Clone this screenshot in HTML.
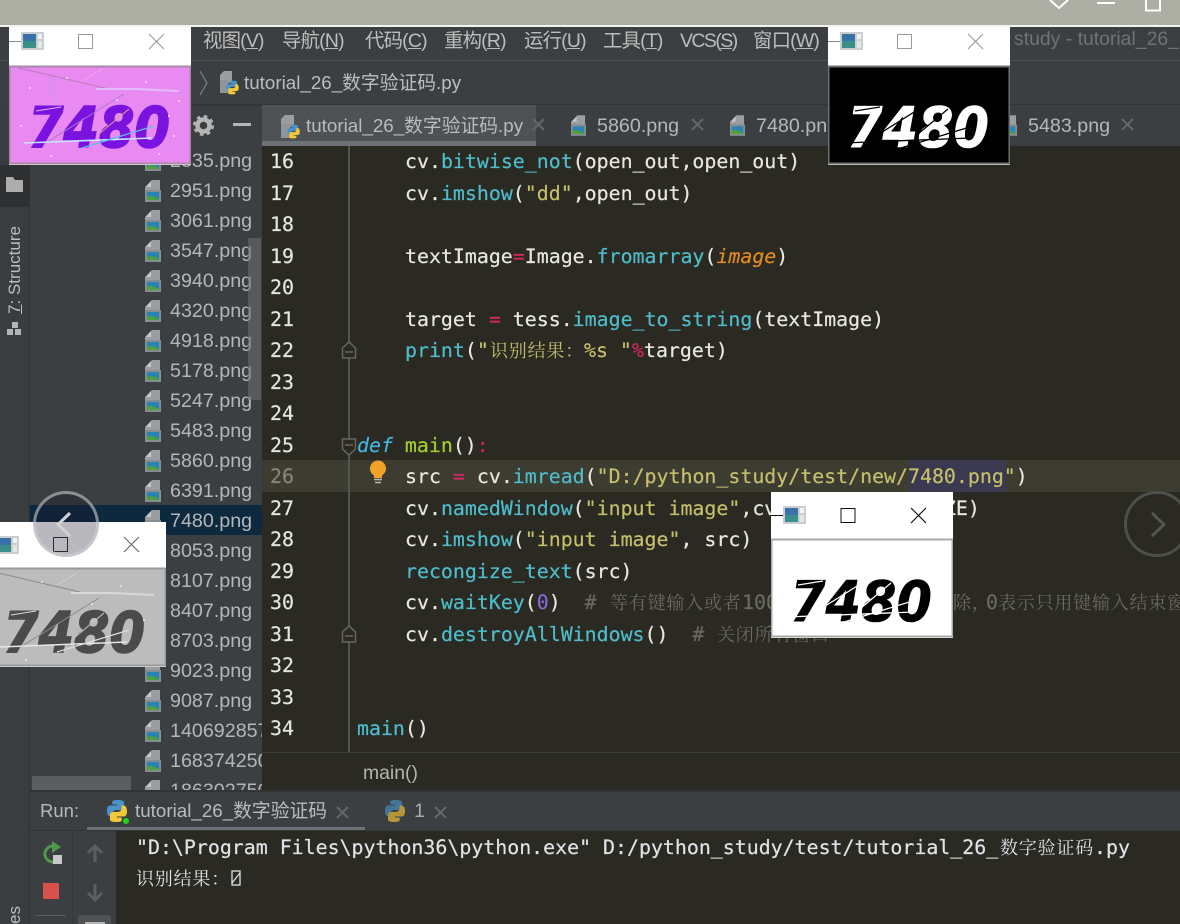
<!DOCTYPE html>
<html lang="zh"><head><meta charset="utf-8"><title>tutorial_26</title>
<style>
html,body{margin:0;padding:0;background:#2a2a23}
#p{position:relative;width:1180px;height:924px;overflow:hidden;background:#3c3f41;font-family:"Liberation Sans","Noto Sans CJK SC",sans-serif;font-size:19.6px;color:#bbb}
.a{position:absolute}
.m{position:absolute;top:27px;line-height:28px;white-space:nowrap;font-size:19.4px;letter-spacing:-.8px;color:#bdbdbd}
.f{position:absolute;left:170px;line-height:30px;height:30px;margin-top:1px;white-space:nowrap;font-size:19.7px;color:#b4b6b8}
.ic{position:absolute;left:145px;width:16px;height:22px}
.ln{position:absolute;left:270px;width:40px;margin-top:1px;font:19.9px/31.5px "DejaVu Sans Mono",monospace;color:#e6e6e0;height:31.5px;-webkit-text-stroke:.2px}
.c{position:absolute;margin-top:1px;white-space:pre;font:19.9px/31.5px "DejaVu Sans Mono","Noto Serif CJK SC",monospace;color:#e8e8e0;height:31.5px;-webkit-text-stroke:.2px}
.c i{font-style:normal}.fn{color:#4fbccb}.st{color:#c6bf6c}.op{color:#d32660}.kw{color:#45b4e0;font-style:italic!important}.gr{color:#a3cf2a}.or{color:#e08a22;font-style:italic!important}.nu{color:#8868d8}.cm{color:#6a6a5e}
.z{font:18px/31.5px "Noto Serif CJK SC",serif;letter-spacing:.8px;-webkit-text-stroke:0}
.win{position:absolute;width:182px;background:#fff}
.win svg{display:block}
.tb{position:absolute}
.cap{font:italic bold 56px "DejaVu Sans",sans-serif}
.u{font-size:18.8px}
</style></head><body>
<div id="p">
<svg width="0" height="0" style="position:absolute"><defs>
<symbol id="py" viewBox="0 0 22 24"><path d="M10.8 1C6 1 6.3 3 6.3 3v2.5h4.8v1H4C2 6.500 1 8.500 1 12s1.500 5.500 3.500 5.500H6.500v-3c0-2 1.800-3.500 3.800-3.500h4.700c1.700 0 3-1.300 3-3V3.500C18 1.800 16.300 1 10.800 1z" fill="#4a93c9"/><path d="M11.200 23c4.800 0 4.500-2 4.500-2v-2.500h-4.800v-1H18c2 0 3-2 3-5.500s-1.500-5.500-3.500-5.500H15.500v3c0 2-1.800 3.500-3.800 3.500H7c-1.700 0-3 1.300-3 3v4.500C4 22.200 5.700 23 11.200 23z" fill="#f3c737"/></symbol>
<symbol id="im" viewBox="0 0 16 22"><path d="M7 0h8v10H0V7z" fill="#9a9ea1"/><path d="M6 1v6H1z" fill="#c4c6c8"/><rect x="0" y="10" width="16" height="12" fill="#878d90"/><rect x="2" y="12" width="12" height="8" fill="#2784b4"/><path d="M2 20v-3c3-2 6-1 12 2v1z" fill="#4e9f3d"/></symbol>
<symbol id="wi" viewBox="0 0 23 18"><rect width="23" height="18" fill="#c9cfd0"/><rect x="2" y="2" width="13" height="14" fill="#3b8f8a"/><rect x="2" y="2" width="13" height="7" fill="#3a72a8"/><rect x="17" y="2" width="4" height="5" fill="#eef4f2"/><rect x="17" y="9" width="4" height="7" fill="#e3e8e3"/></symbol>
</defs></svg>

<!-- top title strip -->
<div class="a" style="left:0;top:0;width:1180px;height:25px;background:#adafa5"></div>
<div class="a" style="left:0;top:25px;width:1180px;height:2px;background:#f2f2f0"></div>
<svg class="a" style="left:1045px;top:0" width="125" height="14" fill="none" stroke="#fff" stroke-width="2"><path d="M5 0l9 8 9-8"/><path d="M52 3h18"/><path d="M101 0v10.500h14V0"/></svg>

<!-- menu -->
<div class="m" style="left:203px">视图(<u>V</u>)</div>
<div class="m" style="left:282px">导航(<u>N</u>)</div>
<div class="m" style="left:365px">代码(<u>C</u>)</div>
<div class="m" style="left:444px">重构(<u>R</u>)</div>
<div class="m" style="left:524px">运行(<u>U</u>)</div>
<div class="m" style="left:603px">工具(<u>T</u>)</div>
<div class="m" style="left:680px;letter-spacing:-1.500px">VCS(<u>S</u>)</div>
<div class="m" style="left:753px">窗口(<u>W</u>)</div>
<div class="m" style="left:1014px;top:25px;letter-spacing:0;color:#707274">study - tutorial_26_</div>
<div class="a" style="left:0;top:60px;width:1180px;height:1px;background:#4d5052"></div>

<!-- nav bar -->
<svg class="a" style="left:198px;top:70px" width="12" height="26" fill="none" stroke="#777" stroke-width="1.300"><path d="M2 1l7 12-7 12"/></svg>
<svg class="a" style="left:219px;top:70px" width="21" height="25"><path d="M5 1h8v12H1V5z" fill="#9a9ea1"/><rect x="1" y="10" width="8" height="13" fill="#8f9598"/><use href="#py" x="6" y="10" width="15" height="15"/></svg>
<div class="a u" style="left:244px;top:68px;line-height:30px;white-space:nowrap;color:#bdbdbd">tutorial_26_数字验证码.py</div>
<div class="a" style="left:0;top:104px;width:1180px;height:2px;background:#323436"></div>

<!-- left tool strip -->
<div class="a" style="left:0;top:104px;width:29px;height:820px;background:#3a3d3f"></div>
<div class="a" style="left:29px;top:104px;width:1px;height:820px;background:#2f3133"></div>
<div class="a" style="left:0;top:165px;width:29px;height:42px;background:#2e3032"></div>
<svg class="a" style="left:6px;top:176px" width="17" height="16"><path d="M0 1h7l2 3h8v12H0z" fill="#adadad"/></svg>
<div class="a" style="left:15px;top:270px;transform:translate(-50%,-50%) rotate(-90deg);white-space:nowrap;font-size:17px;line-height:20px;color:#bdbdbd"><u>7</u>: Structure</div>
<svg class="a" style="left:7px;top:322px" width="15" height="14" fill="#b4b4b4"><rect x="5" y="0" width="6" height="6"/><rect x="0" y="7" width="6" height="6"/><rect x="8" y="7" width="6" height="6"/></svg>
<div class="a" style="left:15px;top:915px;transform:translate(-50%,-50%) rotate(-90deg);white-space:nowrap;font-size:17px;line-height:20px;color:#bdbdbd">es</div>

<!-- sidebar tools -->
<svg class="a" style="left:193px;top:115px" width="21" height="21"><circle cx="10.500" cy="10.500" r="6" fill="none" stroke="#b5b5b5" stroke-width="4.500"/><circle cx="10.500" cy="10.500" r="9" fill="none" stroke="#b5b5b5" stroke-width="3" stroke-dasharray="3.500 3.570"/></svg>
<div class="a" style="left:233px;top:123px;width:18px;height:3px;background:#b5b5b5"></div>

<!-- file tree -->
<div class="a" style="left:30px;top:505px;width:232px;height:30px;background:#0d293e"></div>
<div class="a" style="left:30px;top:146px;width:232px;height:644px;overflow:hidden" id="t">
<div style="position:absolute;left:-30px;top:-146px;width:262px;height:800px">
<div class="f" style="top:145px">2835.png</div><svg class="ic" style="top:149px"><use href="#im"/></svg>
<div class="f" style="top:175px">2951.png</div><svg class="ic" style="top:180px"><use href="#im"/></svg>
<div class="f" style="top:205px">3061.png</div><svg class="ic" style="top:210px"><use href="#im"/></svg>
<div class="f" style="top:235px">3547.png</div><svg class="ic" style="top:240px"><use href="#im"/></svg>
<div class="f" style="top:265px">3940.png</div><svg class="ic" style="top:270px"><use href="#im"/></svg>
<div class="f" style="top:295px">4320.png</div><svg class="ic" style="top:300px"><use href="#im"/></svg>
<div class="f" style="top:325px">4918.png</div><svg class="ic" style="top:330px"><use href="#im"/></svg>
<div class="f" style="top:355px">5178.png</div><svg class="ic" style="top:360px"><use href="#im"/></svg>
<div class="f" style="top:385px">5247.png</div><svg class="ic" style="top:390px"><use href="#im"/></svg>
<div class="f" style="top:415px">5483.png</div><svg class="ic" style="top:420px"><use href="#im"/></svg>
<div class="f" style="top:445px">5860.png</div><svg class="ic" style="top:450px"><use href="#im"/></svg>
<div class="f" style="top:475px">6391.png</div><svg class="ic" style="top:480px"><use href="#im"/></svg>
<div class="f" style="top:505px">7480.png</div><svg class="ic" style="top:510px"><use href="#im"/></svg>
<div class="f" style="top:535px">8053.png</div><svg class="ic" style="top:540px"><use href="#im"/></svg>
<div class="f" style="top:565px">8107.png</div><svg class="ic" style="top:570px"><use href="#im"/></svg>
<div class="f" style="top:595px">8407.png</div><svg class="ic" style="top:600px"><use href="#im"/></svg>
<div class="f" style="top:625px">8703.png</div><svg class="ic" style="top:630px"><use href="#im"/></svg>
<div class="f" style="top:655px">9023.png</div><svg class="ic" style="top:660px"><use href="#im"/></svg>
<div class="f" style="top:685px">9087.png</div><svg class="ic" style="top:690px"><use href="#im"/></svg>
<div class="f" style="top:715px">1406928571.png</div><svg class="ic" style="top:720px"><use href="#im"/></svg>
<div class="f" style="top:745px">1683742501.png</div><svg class="ic" style="top:750px"><use href="#im"/></svg>
<div class="f" style="top:775px">1863027501.png</div><svg class="ic" style="top:780px"><use href="#im"/></svg>
</div></div>
<div class="a" style="left:248px;top:238px;width:13px;height:162px;background:rgba(110,112,114,.55)"></div>
<div class="a" style="left:32px;top:776px;width:99px;height:14px;background:#5b5d5f"></div>

<!-- tab bar -->
<div class="a" style="left:262px;top:105px;width:918px;height:40px;background:#3c3f41"></div>
<div class="a" style="left:262px;top:105px;width:274px;height:37px;background:#4e5254"></div>
<div class="a" style="left:262px;top:141px;width:274px;height:5px;background:#6d7074"></div>
<svg class="a" style="left:279px;top:114px" width="23" height="25"><path d="M6 1h9v12H2V5z" fill="#9a9ea1"/><rect x="2" y="10" width="9" height="14" fill="#8f9598"/><use href="#py" x="7" y="10" width="15" height="15"/></svg>
<div class="a u" style="left:306px;top:111px;line-height:30px;white-space:nowrap;color:#b9bbbd">tutorial_26_数字验证码.py</div>
<svg class="a" style="left:532px;top:118px" width="14" height="14" stroke="#64676a" stroke-width="2"><path d="M1 1l11 11M12 1L1 12"/></svg>
<svg class="a" style="left:571px;top:115px;width:15px;height:21px"><use href="#im" width="15" height="21"/></svg>
<div class="a" style="left:597px;top:111px;line-height:30px;font-size:19.7px;color:#b4b6b8">5860.png</div>
<svg class="a" style="left:691px;top:118px" width="14" height="14" stroke="#64676a" stroke-width="2"><path d="M1 1l11 11M12 1L1 12"/></svg>
<svg class="a" style="left:730px;top:115px;width:15px;height:21px"><use href="#im" width="15" height="21"/></svg>
<div class="a" style="left:756px;top:111px;line-height:30px;font-size:19.7px;color:#b4b6b8">7480.png</div>
<svg class="a" style="left:1002px;top:115px;width:15px;height:21px"><use href="#im" width="15" height="21"/></svg>
<div class="a" style="left:1028px;top:111px;line-height:30px;font-size:19.7px;color:#b4b6b8">5483.png</div>
<svg class="a" style="left:1121px;top:118px" width="14" height="14" stroke="#64676a" stroke-width="2"><path d="M1 1l11 11M12 1L1 12"/></svg>

<!-- editor -->
<div class="a" style="left:262px;top:146px;width:918px;height:644px;background:#2a2a23"></div>
<div class="a" style="left:262px;top:460px;width:918px;height:32px;background:#3d3c31"></div>
<div class="a" style="left:909px;top:460px;width:97px;height:32px;background:#3a3950"></div>
<div class="a" style="left:348px;top:146px;width:2px;height:607px;background:#55554f"></div>
<div class="a" style="left:262px;top:752px;width:918px;height:1px;background:#3e3e38"></div>
<svg class="a" style="left:341px;top:341px" width="16" height="18" fill="#2a2a23" stroke="#66665f" stroke-width="1.500"><path d="M1.500 17V7L8 1l6.500 6v10z"/><path d="M4 11h8"/></svg>
<svg class="a" style="left:341px;top:438px" width="16" height="18" fill="#2a2a23" stroke="#66665f" stroke-width="1.500"><path d="M1.500 1v10L8 17l6.500-6V1z"/><path d="M4 7h8"/></svg>
<svg class="a" style="left:341px;top:625px" width="16" height="18" fill="#2a2a23" stroke="#66665f" stroke-width="1.500"><path d="M1.500 17V7L8 1l6.500 6v10z"/><path d="M4 11h8"/></svg>
<svg class="a" style="left:369px;top:460px" width="18" height="24"><circle cx="9" cy="8.500" r="8" fill="#f2a229"/><rect x="5" y="15" width="8" height="3" fill="#f2a229"/><path d="M5 19.500h8M6 22.500h6" stroke="#b9b9b0" stroke-width="1.500"/></svg>

<div class="ln" style="top:145.250px">16</div><div class="ln" style="top:176.750px">17</div><div class="ln" style="top:208.250px">18</div><div class="ln" style="top:239.750px">19</div><div class="ln" style="top:271.250px">20</div><div class="ln" style="top:302.750px">21</div><div class="ln" style="top:334.250px">22</div><div class="ln" style="top:365.750px">23</div><div class="ln" style="top:397.250px">24</div><div class="ln" style="top:428.750px">25</div><div class="ln" style="top:460.250px;color:#85857c">26</div><div class="ln" style="top:491.750px">27</div><div class="ln" style="top:523.250px">28</div><div class="ln" style="top:554.750px">29</div><div class="ln" style="top:586.250px">30</div><div class="ln" style="top:617.750px">31</div><div class="ln" style="top:649.250px">32</div><div class="ln" style="top:680.750px">33</div><div class="ln" style="top:712.250px">34</div>

<div class="c" style="left:405px;top:145.250px">cv.<i class="fn">bitwise_not</i>(open_out,open_out)</div>
<div class="c" style="left:405px;top:176.750px">cv.<i class="fn">imshow</i>(<i class="st">"dd"</i>,open_out)</div>
<div class="c" style="left:405px;top:239.750px">textImage<i class="op">=</i>Image.<i class="fn">fromarray</i>(<i class="or">image</i>)</div>
<div class="c" style="left:405px;top:302.750px">target <i class="op">=</i> tess.<i class="fn">image_to_string</i>(textImage)</div>
<div class="c" style="left:405px;top:334.250px"><i class="fn">print</i>(<i class="st">"</i></div>
<div class="c z st" style="left:490px;top:334.250px">识别结果：</div>
<div class="c st" style="left:584px;top:334.250px">%s "</div>
<div class="c" style="left:632px;top:334.250px"><i class="op">%</i>target)</div>
<div class="c" style="left:357px;top:428.750px"><i class="kw">def</i> <i class="gr">main</i>()<i class="op">:</i></div>
<div class="c" style="left:405px;top:460.250px">src <i class="op">=</i> cv.<i class="fn">imread</i>(<i class="st">"D:/python_study/test/new/7480.png"</i>)</div>
<div class="c" style="left:405px;top:491.750px">cv.<i class="fn">namedWindow</i>(<i class="st">"input image"</i>,cv.WINDOW_AUTOSIZE)</div>
<div class="c" style="left:405px;top:523.250px">cv.<i class="fn">imshow</i>(<i class="st">"input image"</i>, src)</div>
<div class="c" style="left:405px;top:554.750px"><i class="fn">recongize_text</i>(src)</div>
<div class="c" style="left:405px;top:586.250px">cv.<i class="fn">waitKey</i>(<i class="nu">0</i>)  <i class="cm">#</i></div>
<div class="c z cm" style="left:610px;top:586.250px">等有键输入或者</div>
<div class="c cm" style="left:742px;top:586.250px">1000ms</div>
<div class="c z cm" style="left:953px;top:586.250px">除，</div>
<div class="c cm" style="left:986px;top:586.250px">0</div>
<div class="c z cm" style="left:998px;top:586.250px">表示只用键输入结束窗口</div>
<div class="c" style="left:405px;top:617.750px">cv.<i class="fn">destroyAllWindows</i>()  <i class="cm">#</i></div>
<div class="c z cm" style="left:717px;top:617.750px">关闭所有窗口</div>
<div class="c" style="left:357px;top:712.250px"><i class="fn">main</i>()</div>
<div class="a" style="left:363px;top:758px;line-height:30px;font-size:19.4px;color:#b4b4ae">main()</div>

<!-- run panel -->
<div class="a" style="left:30px;top:790px;width:1150px;height:134px;background:#3c3f41"></div>
<div class="a" style="left:30px;top:790px;width:1150px;height:2px;background:#313335"></div>
<div class="a" style="left:40px;top:796px;line-height:30px;font-size:18.500px;color:#b8b8b8">Run:</div>
<svg class="a" style="left:106px;top:799px" width="24" height="25"><use href="#py" width="22" height="24"/><circle cx="20" cy="22" r="3" fill="#1fd31f"/></svg>
<div class="a u" style="left:135px;top:796px;line-height:30px;white-space:nowrap;color:#b9bbbd">tutorial_26_数字验证码</div>
<svg class="a" style="left:336px;top:806px" width="13" height="13" stroke="#64676a" stroke-width="2"><path d="M1 1l11 11M12 1L1 12"/></svg>
<svg class="a" style="left:384px;top:799px;opacity:.65" width="23" height="24"><use href="#py" width="22" height="24"/></svg>
<div class="a" style="left:414px;top:796px;line-height:30px;font-size:19.6px;color:#a8aaac">1</div>
<svg class="a" style="left:434px;top:806px" width="13" height="13" stroke="#64676a" stroke-width="2"><path d="M1 1l11 11M12 1L1 12"/></svg>
<div class="a" style="left:87px;top:827px;width:278px;height:4px;background:#6d7074"></div>
<div class="a" style="left:30px;top:830px;width:1150px;height:1px;background:#333537"></div>
<div class="a" style="left:116px;top:831px;width:1064px;height:93px;background:#2a2a23"></div>
<div class="a" style="left:72px;top:831px;width:1px;height:93px;background:#333537"></div>
<svg class="a" style="left:41px;top:841px" width="24" height="26"><path d="M11 5a8 8 0 1 0 2 16" fill="none" stroke="#4c9a4a" stroke-width="3"/><path d="M11 0l9 6-9 6z" fill="#4c9a4a"/><rect x="12" y="14" width="9" height="9" fill="#c8c8c8"/></svg>
<div class="a" style="left:43px;top:883px;width:16px;height:16px;background:#d9504c"></div>
<div class="a" style="left:35px;top:915px;width:31px;height:1px;background:#5a5d5f"></div>
<svg class="a" style="left:86px;top:843px" width="18" height="20" fill="none" stroke="#5c5f61" stroke-width="3"><path d="M9 19V3M2 10l7-7 7 7"/></svg>
<svg class="a" style="left:86px;top:883px" width="18" height="20" fill="none" stroke="#5c5f61" stroke-width="3"><path d="M9 1v16M2 10l7 7 7-7"/></svg>
<div class="a" style="left:78px;top:915px;width:33px;height:9px;background:#505355;border-radius:3px 3px 0 0"></div>
<div class="a" style="left:85px;top:922px;width:20px;height:2px;background:#b5b5b5"></div>

<div class="c" style="left:136px;top:831px;color:#dfe3e6">"D:\Program Files\python36\python.exe" D:/python_study/test/tutorial_26_</div>
<div class="c z" style="left:1000px;top:831px;color:#dfe3e6">数字验证码</div>
<div class="c" style="left:1094px;top:831px;color:#dfe3e6">.py</div>
<div class="c z" style="left:136px;top:862px;color:#dfe3e6">识别结果：</div>
<svg class="a" style="left:231px;top:870px" width="11" height="17" fill="none" stroke="#dfe3e6" stroke-width="1.300"><rect x="1" y="1" width="8" height="14"/><path d="M1 13L9 3"/></svg>

<!-- right nav circle -->
<div class="a" style="left:1124px;top:491px;width:60px;height:60px;border:3px solid #4f4f4a;border-radius:50%"></div>
<svg class="a" style="left:1150px;top:511px" width="18" height="27" fill="none" stroke="#55554f" stroke-width="3"><path d="M2 2l12 11.500L2 25"/></svg>

<!-- window 1 pink -->
<div class="win" style="left:9px;top:27px;height:138px">
<svg class="tb" style="left:0;top:0" width="182" height="39"><path d="M0 14.500h13" stroke="#888"/><use href="#wi" x="12" y="5" width="23" height="18"/><rect x="69.500" y="7.500" width="14" height="14" fill="none" stroke="#999"/><path d="M140 7l15 15M155 7l-15 15" stroke="#999" stroke-width="1.100"/></svg>
<svg class="a" style="left:0;top:38px" width="182" height="100" viewBox="1 0 182 100">
<rect x="1.500" y="1.500" width="181" height="97" fill="#e98af2" stroke="#a888a8" stroke-width="2"/>
<text class="cap" x="20" y="82" fill="#7a12e0" stroke="#7a12e0" stroke-width="1.500" textLength="142" lengthAdjust="spacingAndGlyphs">7480</text>
<g fill="none" stroke-width="1"><path d="M11 3l90 21" stroke="#b87ab8"/><path d="M88 24h41l42 2" stroke="#e3bdfd" stroke-width="2"/><path d="M74 16l20-12" stroke="#f0a8f4"/><path d="M36 79l80-50" stroke="#a87ac8"/><path d="M91 69l30-25" stroke="#e0a080"/><path d="M41 13l7 23" stroke="#b8a0e0"/><path d="M16 78l128-5" stroke="#c8e4ff" stroke-width="1.500"/><path d="M74 83l72-22" stroke="#60c0f0" stroke-width="1.300"/><path d="M28 46l25-4" stroke="#d8b8f8"/></g>
<g fill="#f6c8f6"><rect x="21" y="22" width="2" height="2"/><rect x="58" y="12" width="2" height="2"/><rect x="108" y="34" width="2" height="2"/><rect x="137" y="16" width="2" height="2"/><rect x="160" y="50" width="2" height="2"/><rect x="170" y="35" width="2" height="2"/><rect x="150" y="88" width="2" height="2"/><rect x="42" y="90" width="2" height="2"/><rect x="12" y="60" width="2" height="2"/><rect x="165" y="70" width="2" height="2"/></g>
</svg></div>

<!-- window 2 black -->
<div class="win" style="left:828px;top:27px;height:138px">
<svg class="tb" style="left:0;top:0" width="182" height="39"><path d="M0 14.500h13" stroke="#888"/><use href="#wi" x="12" y="5" width="23" height="18"/><rect x="69.500" y="7.500" width="14" height="14" fill="none" stroke="#999"/><path d="M140 7l15 15M155 7l-15 15" stroke="#999" stroke-width="1.100"/></svg>
<svg class="a" style="left:0;top:38px" width="182" height="100" viewBox="1 0 182 100">
<rect x="1.500" y="1.500" width="181" height="97" fill="#000" stroke="#6f6f6f" stroke-width="2"/>
<text class="cap" x="20" y="82" fill="#fff" stroke="#fff" stroke-width=".6" textLength="142" lengthAdjust="spacingAndGlyphs">7480</text>
<g fill="none" stroke="#000" stroke-width="1.300"><path d="M28 46l25-4"/><path d="M36 79l80-50"/><path d="M91 69l30-25"/><path d="M16 78l128-5"/><path d="M74 83l72-22"/></g>
</svg></div>

<!-- window 3 white -->
<div class="win" style="left:771px;top:492px;height:146px">
<svg class="tb" style="left:0;top:0" width="182" height="47"><path d="M0 23.500h13" stroke="#111"/><use href="#wi" x="12" y="14" width="23" height="18"/><rect x="70" y="16.500" width="14" height="14" fill="none" stroke="#111"/><path d="M140 16l15 15M155 16l-15 15" stroke="#111" stroke-width="1.200"/></svg>
<svg class="a" style="left:0;top:46px" width="182" height="100" viewBox="1 0 182 100">
<rect x="1.500" y="1.500" width="181" height="97" fill="#fff" stroke="#aaa" stroke-width="2"/>
<text class="cap" x="20" y="83" fill="#000" stroke="#000" stroke-width=".6" textLength="142" lengthAdjust="spacingAndGlyphs">7480</text>
<g fill="none" stroke="#fff" stroke-width="1.300"><path d="M28 47l25-4"/><path d="M36 80l80-50"/><path d="M91 70l30-25"/><path d="M16 79l128-5"/><path d="M74 84l72-22"/></g>
</svg></div>

<!-- window 4 grey -->
<div class="win" style="left:-16px;top:522px;height:145px">
<svg class="tb" style="left:0;top:0" width="182" height="47"><use href="#wi" x="12" y="14" width="23" height="18"/><rect x="69.500" y="15.500" width="14" height="14" fill="none" stroke="#333"/><path d="M140 15l15 15M155 15l-15 15" stroke="#666" stroke-width="1.100"/></svg>
<svg class="a" style="left:0;top:45px" width="182" height="100" viewBox="1 0 182 100">
<rect x="1.500" y="1.500" width="181" height="97" fill="#bcbcbc" stroke="#9a9a9a" stroke-width="2"/>
<text class="cap" x="20" y="85" fill="#4b4b4b" stroke="#4b4b4b" stroke-width="1.500" textLength="142" lengthAdjust="spacingAndGlyphs">7480</text>
<g fill="none" stroke-width="1"><path d="M11 5l90 21" stroke="#8a8a8a"/><path d="M88 26h41l42 2" stroke="#d8d8d8" stroke-width="2"/><path d="M74 18l20-12" stroke="#cfcfcf"/><path d="M36 81l80-50" stroke="#8c8c8c"/><path d="M91 71l30-25" stroke="#c6c6c6"/><path d="M16 80l128-5" stroke="#e6e6e6" stroke-width="1.500"/><path d="M74 85l72-22" stroke="#dcdcdc" stroke-width="1.300"/><path d="M28 48l25-4" stroke="#dadada"/></g>
<g fill="#dedede"><rect x="58" y="14" width="2" height="2"/><rect x="108" y="36" width="2" height="2"/><rect x="137" y="18" width="2" height="2"/><rect x="160" y="52" width="2" height="2"/><rect x="42" y="92" width="2" height="2"/></g>
</svg></div>

<!-- left nav circle -->
<div class="a" style="left:33px;top:491px;width:60px;height:60px;border:3px solid rgba(205,205,210,.6);border-radius:50%;background:rgba(20,20,40,.3)"></div>
<svg class="a" style="left:55px;top:511px" width="18" height="27" fill="none" stroke="#d2d2d6" stroke-width="3"><path d="M15 2L3 13.500 15 25"/></svg>
</div>
</body></html>
